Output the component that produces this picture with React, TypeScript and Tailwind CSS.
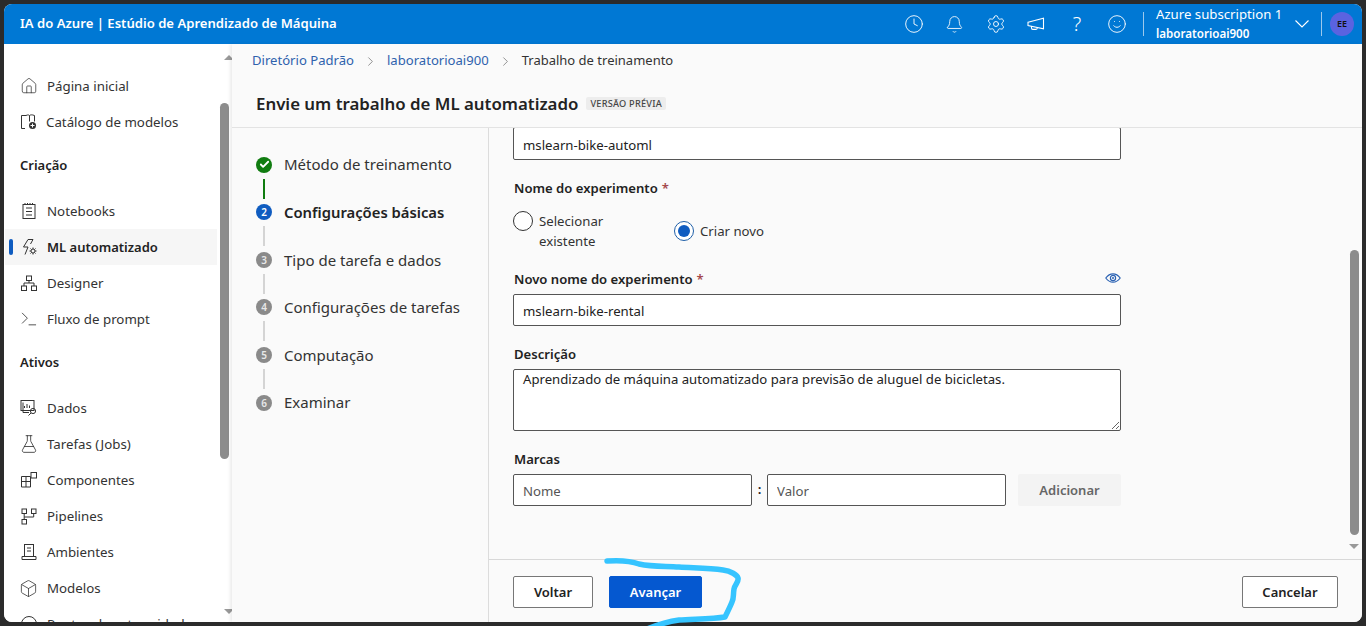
import React from "react";
import { Clock, Bell, Settings, Smile, ChevronRight, House, Terminal, FlaskConical, Box, Check } from "lucide-react";

const S = ({ children }: { children: React.ReactNode }) => (
  <svg width="20" height="20" viewBox="0 0 20 20" fill="none" stroke="#333" strokeWidth="1" className="shrink-0">{children}</svg>
);

const icons: Record<string, React.ReactNode> = {
  home: <House size={18} strokeWidth={1} color="#333" />,
  catalog: <S><path d="M7 3.5H2.5v13H6M7 3.5c2-1 3-.5 3.5 0 .7-.7 2.5-1 5 0v6" /><path d="M10.5 3.5v6" /><circle cx="13.5" cy="13.5" r="3.5" fill="#333" stroke="none" /><path d="M11.5 13.5h4M13.5 11.5v4" stroke="#fff" /></S>,
  notebook: <S><rect x="4" y="3.5" width="12" height="14" /><path d="M7 7h6M7 10.5h6M7 14h6M6 2v2M8.5 2v2M11 2v2M13.5 2v2" /></S>,
  automl: <S><path d="M9 2.5 4.5 10H9l-3 7.5" /><path d="M9 2.500h5L11.5 7" /><circle cx="14" cy="14" r="2" /><path d="M14 10.5v1.5M14 16v1.5M10.5 14H12M16 14h1.5M11.5 11.5l1 1M15.5 15.5l1 1M16.5 11.5l-1 1M12.5 15.5l-1 1" /></S>,
  designer: <S><rect x="7.5" y="3" width="5" height="4.5" /><rect x="2.5" y="13" width="5" height="4.5" /><rect x="12.5" y="13" width="5" height="4.5" /><path d="M10 7.5V10M5 13v-3h10v3" /></S>,
  prompt: <Terminal size={20} strokeWidth={1} color="#333" />,
  data: <S><rect x="2" y="2.5" width="13" height="10" /><path d="M4 4.500v10h6M5.500 10V8M8 10V6M10.500 10V7.500" /><circle cx="14" cy="13" r="2.6" /><path d="m12 15-2.5 2.5" /></S>,
  jobs: <FlaskConical size={20} strokeWidth={1} color="#333" />,
  components: <S><path d="M2.5 6.5h9V17h-9zM2.5 11.500h9M7 6.500V17" /><rect x="12" y="2.5" width="5.5" height="5.5" /></S>,
  pipelines: <S><rect x="3" y="3" width="4.5" height="4.5" /><rect x="12.5" y="3" width="4.5" height="4.5" /><rect x="3" y="13.5" width="4.5" height="4.5" /><path d="M5.2 7.5v6M5.2 11h9.5V7.5" /></S>,
  env: <S><rect x="5.5" y="2.5" width="9" height="12" /><path d="M8 6h4M8 9h4M3 17.5h14v-3H3z" /></S>,
  models: <Box size={19} strokeWidth={1} color="#333" />,
  endpoint: <S><circle cx="10" cy="10" r="7.5" /></S>,
};

const NavItem = ({ icon, label, active, gap = "gap-[8px]" }: { icon: string; label: string; active?: boolean; gap?: string }) => (
  <div className={`relative ml-px flex h-9 w-[212px] items-center pl-[13px] ${gap} ${active ? "bg-[#f6f6f6] text-[13px] font-semibold text-[#222]" : "text-[13.3px] text-[#333]"}`}>
    {active && <span className="absolute left-[4px] top-[10px] h-4 w-1 rounded-sm bg-[#0f5cc0]" />}
    <span className="flex w-[21px] justify-center">{icons[icon]}</span>
    <span className="whitespace-nowrap pt-px">{label}</span>
  </div>
);

const Heading = ({ label }: { label: string }) => (
  <div className="h-[53px] pl-4 pt-[15px] text-[13px] font-semibold leading-[20px] text-[#222]">{label}</div>
);

const Step = ({ n, label, state, last }: { n: number; label: string; state?: "done" | "active"; last?: boolean }) => (
  <div className="h-[47.6px]">
    <div className="flex h-4 items-center gap-3">
      {state === "done" ? (
        <span className="flex h-4 w-4 items-center justify-center rounded-full bg-[#107c10]"><Check size={11} strokeWidth={4} color="#fff" /></span>
      ) : (
        <span className={`flex h-4 w-4 items-center justify-center rounded-full text-[10px] font-semibold leading-none ${state === "active" ? "bg-[#0f5cc0] text-white" : "bg-[#8a8a8a] text-[#e8e8e8]"}`}>{n}</span>
      )}
      <span className={`whitespace-nowrap ${state === "active" ? "text-[14.8px] font-semibold text-[#222]" : "text-[15px] text-[#333]"}`}>{label}</span>
    </div>
    {!last && <div className={`ml-[7px] mt-[6px] h-5 w-0.5 ${state === "done" ? "bg-[#107c10]" : "bg-[#d4d4d4]"}`} />}
  </div>
);

const Label = ({ children, req }: { children: React.ReactNode; req?: boolean }) => (
  <div className="h-5 pl-px text-[13.1px] font-semibold leading-5 text-[#222]">
    {children}
    {req && <span className="ml-1 text-[#a4484c]">*</span>}
  </div>
);

const field = "block rounded-[2px] border border-[#555] bg-white px-[9px] pt-[2px] text-[13.2px] text-[#222] placeholder:text-[#555] outline-none";

const Arrow = ({ up, cls }: { up?: boolean; cls: string }) => (
  <span className={`absolute h-0 w-0 border-x-[5px] border-x-transparent ${up ? "border-b-[5px] border-b-[#999]" : "border-t-[5px] border-t-[#999]"} ${cls}`} />
);

const Btn = ({ children, cls }: { children: React.ReactNode; cls: string }) => (
  <button className={`flex h-8 items-center justify-center rounded-[2px] border pt-[2px] text-[13px] font-semibold ${cls}`}>{children}</button>
);

export default function App() {
  return (
    <div className="relative h-[626px] w-[1366px] overflow-hidden bg-[#2b2b2b] p-1 font-['Noto_Sans','Open_Sans',sans-serif] text-[13.3px]">
      <div className="flex h-[618px] flex-col overflow-hidden rounded-lg bg-white">
        <header className="flex h-10 shrink-0 items-center bg-[#0078d4] text-white">
          <div className="pl-4 text-[13.1px] font-semibold">IA do Azure | Estúdio de Aprendizado de Máquina</div>
          <div className="ml-auto flex items-center">
            <Clock size={20} strokeWidth={1.1} />
            <Bell size={19} strokeWidth={1.1} className="ml-[21px]" />
            <Settings size={20} strokeWidth={1.1} className="ml-[22px]" />
            <svg width="18" height="14" viewBox="0 0 18 14" fill="none" stroke="#fff" strokeWidth="1.1" className="ml-[21px]">
              <path d="M1 5.2 16.500 1.200v10.600L1 8.600zM4.500 9.500v1.600c0 .8.6 1.300 1.300 1.300h3c.8 0 1.300-.4 1.500-1.300" />
            </svg>
            <span className="ml-[24px] w-4 text-center text-[20px] font-light leading-none">?</span>
            <Smile size={20} strokeWidth={1.1} className="ml-[22px]" />
            <span className="ml-4 h-6 w-px bg-[#9cc9ec]" />
            <div className="ml-3 w-[134px]">
              <div className="whitespace-nowrap text-[13.2px] leading-[19px]">Azure subscription 1</div>
              <div className="whitespace-nowrap text-[11.6px] font-semibold leading-[19px]">laboratorioai900</div>
            </div>
            <svg width="14" height="8" viewBox="0 0 14 8" fill="none" stroke="#fff" strokeWidth="1.1" className="ml-[5px]"><path d="m.5.5 6.5 6.500L13.500.5" /></svg>
            <span className="ml-[12px] h-6 w-px bg-[#9cc9ec]" />
            <span className="ml-[8px] mr-2 flex h-6 w-6 items-center justify-center rounded-full bg-[#5a63e0] text-[9px] font-semibold text-[#111]">EE</span>
          </div>
        </header>

        <div className="flex min-h-0 flex-1">
          <aside className="relative w-[228px] shrink-0 overflow-hidden bg-white pt-6">
            <NavItem icon="home" label="Página inicial" />
            <NavItem icon="catalog" label="Catálogo de modelos" gap="gap-[7px]" />
            <Heading label="Criação" />
            <NavItem icon="notebook" label="Notebooks" />
            <NavItem icon="automl" label="ML automatizado" active />
            <NavItem icon="designer" label="Designer" />
            <NavItem icon="prompt" label="Fluxo de prompt" />
            <Heading label="Ativos" />
            <NavItem icon="data" label="Dados" />
            <NavItem icon="jobs" label="Tarefas (Jobs)" />
            <NavItem icon="components" label="Componentes" />
            <NavItem icon="pipelines" label="Pipelines" />
            <NavItem icon="env" label="Ambientes" />
            <NavItem icon="models" label="Modelos" />
            <NavItem icon="endpoint" label="Pontos de extremidade" />
            <Arrow up cls="left-[220px] top-[11px]" />
            <span className="absolute left-[216px] top-[59px] h-[356px] w-[9px] rounded-full bg-[#8c8c8c]" />
            <Arrow cls="left-[220px] top-[565px]" />
          </aside>

          <main className="relative flex min-w-0 flex-1 flex-col bg-[#fafafa] shadow-[-2px_0_3px_rgba(0,0,0,0.08)]">
            <nav className="flex h-[32px] shrink-0 items-center pl-5 pt-[2px] text-[13.1px] text-[#2f62ad]">
              <span>Diretório Padrão</span>
              <ChevronRight size={15} strokeWidth={1} color="#555" className="mx-[9px]" />
              <span>laboratorioai900</span>
              <ChevronRight size={15} strokeWidth={1} color="#555" className="mx-[9px]" />
              <span className="text-[13px] text-[#333]">Trabalho de treinamento</span>
            </nav>
            <div className="flex h-[52px] shrink-0 items-center gap-2 border-b border-[#e3e3e3] pl-6 pt-[4px]">
              <h1 className="whitespace-nowrap text-[16.85px] font-semibold text-[#222]">Envie um trabalho de ML automatizado</h1>
              <span className="rounded-[2px] bg-[#ededed] px-1 text-[9.2px] font-medium tracking-wide text-[#444]">VERSÃO PRÉVIA</span>
            </div>

            <div className="flex min-h-0 flex-1">
              <div className="w-[257px] shrink-0 border-r border-[#dcdcdc] pl-6 pt-[28.6px]">
                <Step n={1} label="Método de treinamento" state="done" />
                <Step n={2} label="Configurações básicas" state="active" />
                <Step n={3} label="Tipo de tarefa e dados" />
                <Step n={4} label="Configurações de tarefas" />
                <Step n={5} label="Computação" />
                <Step n={6} label="Examinar" last />
              </div>

              <div className="relative flex min-w-0 flex-1 flex-col">
                <div className="h-[431px] shrink-0 overflow-hidden pl-6">
                  <input readOnly value="mslearn-bike-automl" className={`${field} -mt-[1px] h-[33px] w-[608px]`} />
                  <div className="mt-[18px]"><Label req>Nome do experimento</Label></div>
                  <div className="mt-[13px] flex h-[42px] items-center text-[13.2px] leading-5 text-[#333]">
                    <div className="flex w-[161px] items-start gap-[6px] self-start">
                      <span className="h-5 w-5 shrink-0 rounded-full border border-[#333] bg-white" />
                      <span>Selecionar<br />existente</span>
                    </div>
                    <div className="mb-[2px] flex items-center gap-[6px]">
                      <span className="flex h-5 w-5 items-center justify-center rounded-full border border-[#1f5fa8] bg-white"><span className="h-3 w-3 rounded-full bg-[#0f5cc0]" /></span>
                      <span>Criar novo</span>
                    </div>
                  </div>
                  <div className="relative mt-[16px] w-[608px]">
                    <Label req>Novo nome do experimento</Label>
                    <svg className="absolute right-0 top-[3px]" width="16" height="12" viewBox="0 0 16 12" fill="none" stroke="#2b62b3" strokeWidth="1.2">
                      <path d="M.8 6C3 3 5.4 1.8 8 1.8S13 3 15.2 6C13 9 10.6 10.2 8 10.2S3 9 .8 6Z" />
                      <circle cx="8" cy="6" r="2.6" />
                      <circle cx="8" cy="6" r="1" fill="#2b62b3" stroke="none" />
                    </svg>
                  </div>
                  <input readOnly value="mslearn-bike-rental" className={`${field} mt-[5px] h-[32px] w-[608px]`} />
                  <div className="mt-[18px]"><Label>Descrição</Label></div>
                  <textarea readOnly value="Aprendizado de máquina automatizado para previsão de aluguel de bicicletas." className="mt-[5px] block h-[62px] w-[608px] rounded-[2px] border border-[#555] bg-white px-[9px] text-[13.15px] leading-[18px] text-[#222] outline-none" />
                  <div className="mt-[18px]"><Label>Marcas</Label></div>
                  <div className="mt-[5px] flex h-8 w-[608px] items-center">
                    <input readOnly placeholder="Nome" className={`${field} h-[32px] w-[239px]`} />
                    <span className="w-[15px] text-center font-semibold text-[#222]">:</span>
                    <input readOnly placeholder="Valor" className={`${field} h-[32px] w-[239px]`} />
                    <button className="ml-3 h-8 flex-1 rounded-[2px] bg-[#f3f3f3] pt-[2px] text-[13px] font-semibold text-[#666]">Adicionar</button>
                  </div>
                </div>
                <footer className="flex h-[63px] shrink-0 items-start border-t border-[#d8d8d8] px-6 pt-[16px]">
                  <Btn cls="w-20 border-[#777] bg-white text-[#222]">Voltar</Btn>
                  <Btn cls="ml-4 w-[93px] border-[#0558d0] bg-[#0558d0] text-white">Avançar</Btn>
                  <Btn cls="ml-auto w-[96px] border-[#777] bg-white text-[#222]">Cancelar</Btn>
                </footer>
                <span className="absolute right-[3px] top-[122px] h-[285px] w-[9px] rounded-full bg-[#8c8c8c]" />
                <Arrow cls="right-[3.5px] top-[416px]" />
              </div>
            </div>
          </main>
        </div>
      </div>

      <svg className="pointer-events-none absolute left-0 top-0" width="1366" height="626" fill="none">
        <path d="M607 561c14-1 24 0 32 3 14 3 26 2 40 3 16 1 30 1 44 3 8 1 14 5 15 8 1 4-3 6-4 11-1 6 0 9-2 13-2 5-5 11-7 15-12 2-32 2-46 3-14 2-22 5-32 9" stroke="#35c4ff" strokeWidth="5.5" strokeLinecap="round" strokeLinejoin="round" />
      </svg>
    </div>
  );
}
